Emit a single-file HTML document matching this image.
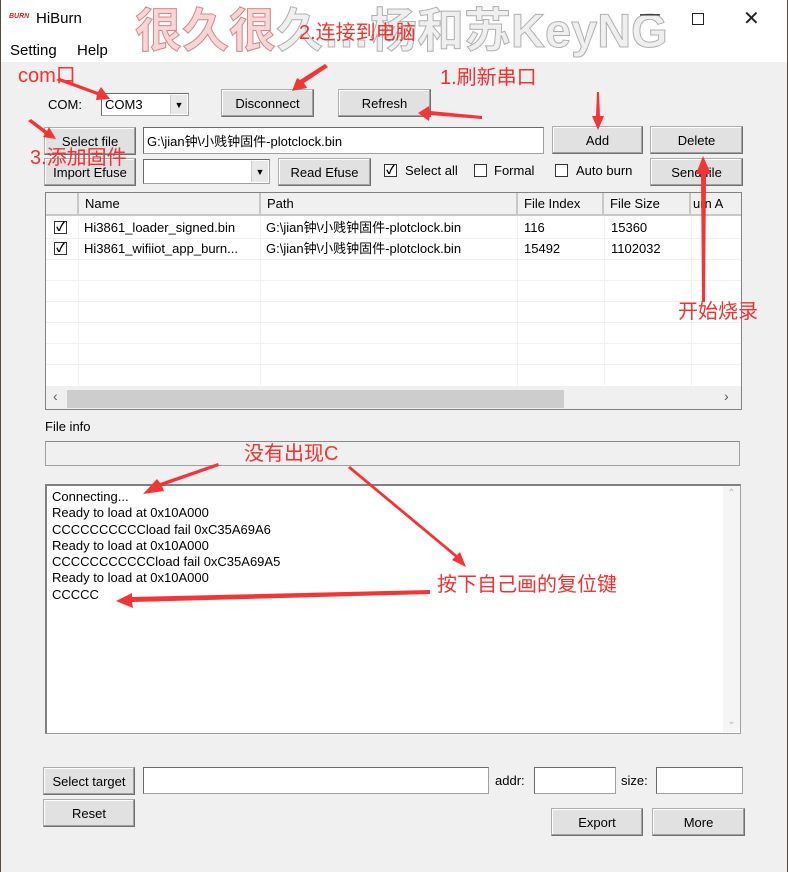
<!DOCTYPE html>
<html><head><meta charset="utf-8"><style>
*{box-sizing:border-box;margin:0;padding:0}
body{width:788px;height:872px;position:relative;overflow:hidden;background:#f0f0f0;font-family:"Liberation Sans","Noto Sans CJK SC",sans-serif;font-size:13px;color:#000}
.a{position:absolute}
.btn{position:absolute;background:#e1e1e1;border:1px solid #adadad;border-right-color:#707070;border-bottom-color:#707070;box-shadow:inset -1px -1px 0 #a0a0a0,inset 1px 1px 0 #fff;display:flex;align-items:center;justify-content:center;font-size:13px}
.inp{position:absolute;background:#fff;border:1px solid #a0a0a0;border-top-color:#696969;border-left-color:#696969;font-size:13px;padding-left:3px;display:flex;align-items:center}
.cb{position:absolute;width:13px;height:13px;border:1px solid #333;background:#fff;font-size:12px;line-height:11px;text-align:center;font-weight:bold}
.red{position:absolute;color:#f53030;font-size:20px;white-space:nowrap;line-height:1}
.dd{position:absolute;right:1px;top:1px;bottom:1px;width:17px;background:#e8e8e8;border-left:1px solid #ccc;font-size:9px;display:flex;align-items:center;justify-content:center}
.hd{position:absolute;top:0;height:22px;line-height:22px;border-right:2px solid #c8c8c8;padding-left:6px;white-space:nowrap;overflow:hidden}
.cell{position:absolute;line-height:21px;white-space:nowrap}
</style></head><body>
<div class="a" style="left:0;top:0;width:788px;height:62px;background:#fff"></div>
<div class="a" style="left:0;top:0;width:1px;height:872px;background:#5a4a40"></div>
<div class="a" style="right:0;top:0;width:1px;height:872px;background:#5a4a40"></div>
<div class="a" style="left:9px;top:13px;color:#d22;font-size:7px;font-style:italic;font-weight:bold">BURN</div>
<div class="a" style="left:36px;top:10px;font-size:15px">HiBurn</div>
<div class="a" style="left:135px;top:-8px;font-size:47px;font-weight:bold;color:#f8d6d6;-webkit-text-stroke:1px #d58888;white-space:nowrap">很久很<span style="color:#efefef;-webkit-text-stroke:1px #b0b0b0">久…杨和苏KeyNG</span></div>
<div class="a" style="left:640px;top:3px;font-size:20px;color:#333">&#8212;</div>
<div class="a" style="left:692px;top:13px;width:12px;height:12px;border:1px solid #222"></div>
<div class="a" style="left:743px;top:6px;font-size:20px;color:#222">✕</div>
<div class="a" style="left:10px;top:42px;font-size:15px">Setting</div>
<div class="a" style="left:77px;top:42px;font-size:15px">Help</div>

<div class="a" style="left:48px;top:97px">COM:</div>
<div class="inp" style="left:101px;top:93px;width:88px;height:23px">COM3<div class="dd">▼</div></div>
<div class="btn" style="left:221px;top:89px;width:93px;height:28px">Disconnect</div>
<div class="btn" style="left:338px;top:89px;width:93px;height:28px">Refresh</div>

<div class="btn" style="left:44px;top:127px;width:92px;height:28px">Select file</div>
<div class="inp" style="left:143px;top:127px;width:401px;height:27px">G:\jian钟\小贱钟固件-plotclock.bin</div>
<div class="btn" style="left:552px;top:126px;width:91px;height:28px">Add</div>
<div class="btn" style="left:650px;top:126px;width:93px;height:28px">Delete</div>

<div class="btn" style="left:44px;top:158px;width:92px;height:28px">Import Efuse</div>
<div class="inp" style="left:143px;top:159px;width:127px;height:25px"><div class="dd">▼</div></div>
<div class="btn" style="left:278px;top:158px;width:93px;height:28px">Read Efuse</div>
<div class="cb" style="left:384px;top:164px">✓</div><div class="a" style="left:405px;top:163px">Select all</div>
<div class="cb" style="left:474px;top:164px"></div><div class="a" style="left:494px;top:163px">Formal</div>
<div class="cb" style="left:555px;top:164px"></div><div class="a" style="left:576px;top:163px">Auto burn</div>
<div class="btn" style="left:650px;top:158px;width:93px;height:28px">Send file</div>

<div class="a" style="left:45px;top:192px;width:697px;height:218px;background:#fff;border:1px solid #828282;overflow:hidden">
<div class="a" style="left:0;top:0;width:697px;height:23px;background:#f0f0f0;border-bottom:2px solid #c8c8c8"></div>
<div class="hd" style="left:0;width:33px"></div>
<div class="hd" style="left:33px;width:182px">Name</div>
<div class="hd" style="left:215px;width:257px">Path</div>
<div class="hd" style="left:472px;width:86px">File Index</div>
<div class="hd" style="left:558px;width:87px">File Size</div>
<div class="hd" style="left:645px;width:60px;border:0;padding-left:2px">urn A</div>
<div class="a" style="left:0;top:45px;width:697px;height:1px;background:#f0f0f0"></div>
<div class="a" style="left:0;top:66px;width:697px;height:1px;background:#f0f0f0"></div>
<div class="a" style="left:0;top:87px;width:697px;height:1px;background:#f0f0f0"></div>
<div class="a" style="left:0;top:108px;width:697px;height:1px;background:#f0f0f0"></div>
<div class="a" style="left:0;top:129px;width:697px;height:1px;background:#f0f0f0"></div>
<div class="a" style="left:0;top:150px;width:697px;height:1px;background:#f0f0f0"></div>
<div class="a" style="left:0;top:171px;width:697px;height:1px;background:#f0f0f0"></div>
<div class="a" style="left:32px;top:24px;width:1px;height:170px;background:#f0f0f0"></div>
<div class="a" style="left:214px;top:24px;width:1px;height:170px;background:#f0f0f0"></div>
<div class="a" style="left:471px;top:24px;width:1px;height:170px;background:#f0f0f0"></div>
<div class="a" style="left:558px;top:24px;width:1px;height:170px;background:#f0f0f0"></div>
<div class="a" style="left:645px;top:24px;width:1px;height:170px;background:#f0f0f0"></div>
<div class="cb" style="left:8px;top:28px">✓</div>
<div class="cell" style="left:38px;top:24px">Hi3861_loader_signed.bin</div>
<div class="cell" style="left:220px;top:24px">G:\jian钟\小贱钟固件-plotclock.bin</div>
<div class="cell" style="left:478px;top:24px">116</div>
<div class="cell" style="left:565px;top:24px">15360</div>
<div class="cb" style="left:8px;top:49px">✓</div>
<div class="cell" style="left:38px;top:45px">Hi3861_wifiiot_app_burn...</div>
<div class="cell" style="left:220px;top:45px">G:\jian钟\小贱钟固件-plotclock.bin</div>
<div class="cell" style="left:478px;top:45px">15492</div>
<div class="cell" style="left:565px;top:45px">1102032</div>
<div class="a" style="left:0;top:193px;width:697px;height:23px;background:#f0f0f0"></div>
<div class="a" style="left:21px;top:197px;width:497px;height:18px;background:#cdcdcd"></div>
<div class="a" style="left:7px;top:195px;color:#555;font-size:14px">‹</div>
<div class="a" style="left:678px;top:195px;color:#555;font-size:14px">›</div>
</div>

<div class="a" style="left:45px;top:419px">File info</div>
<div class="a" style="left:45px;top:441px;width:695px;height:25px;border:1px solid #a0a0a0;border-top-color:#888;background:#f0f0f0"></div>

<div class="a" style="left:45px;top:484px;width:696px;height:250px;background:#fff;border:1px solid #a0a0a0;border-top:2px solid #808080;border-left:2px solid #808080;font-size:13px;line-height:16.3px;padding:3px 0 0 5px">Connecting...<br>Ready to load at 0x10A000<br>CCCCCCCCCCload fail 0xC35A69A6<br>Ready to load at 0x10A000<br>CCCCCCCCCCCload fail 0xC35A69A5<br>Ready to load at 0x10A000<br>CCCCC
<div class="a" style="right:0;top:0;width:17px;height:246px;background:#f5f5f5;color:#bbb;font-size:10px;text-align:center">⌃<div style="position:absolute;bottom:2px;width:17px">⌄</div></div></div>

<div class="btn" style="left:43px;top:767px;width:92px;height:28px">Select target</div>
<div class="inp" style="left:143px;top:767px;width:346px;height:27px"></div>
<div class="a" style="left:495px;top:773px">addr:</div>
<div class="inp" style="left:534px;top:767px;width:82px;height:27px"></div>
<div class="a" style="left:621px;top:773px">size:</div>
<div class="inp" style="left:656px;top:767px;width:87px;height:27px"></div>
<div class="btn" style="left:43px;top:799px;width:92px;height:28px">Reset</div>
<div class="btn" style="left:551px;top:808px;width:92px;height:28px">Export</div>
<div class="btn" style="left:652px;top:808px;width:93px;height:28px">More</div>

<div class="red" style="left:18px;top:66px">com口</div>
<div class="red" style="left:299px;top:23px">2.连接到电脑</div>
<div class="red" style="left:440px;top:68px">1.刷新串口</div>
<div class="red" style="left:30px;top:148px">3.添加固件</div>
<div class="red" style="left:678px;top:302px">开始烧录</div>
<div class="red" style="left:244px;top:444px">没有出现C</div>
<div class="red" style="left:437px;top:575px">按下自己画的复位键</div>

<svg class="a" style="left:0;top:0" width="788" height="872">
<g fill="#f53535">
<polygon points="56,80 60,78 98,92 101,87 110,99 96,100 97,95"/>
<polygon points="325,64 328,67 304,83 307,88 292,91 297,78 300,80"/>
<polygon points="482,116 482,119 430,115 429,121 418,113 429,106 430,111"/>
<polygon points="597,92 599,92 600,116 604,116 598,130 592,116 596,116"/>
<polygon points="28,121 31,119 47,131 49,127 56,139 43,137 45,134"/>
<polygon points="702,302 705,302 706,174 711,174 703,156 696,174 701,174"/>
<polygon points="218,463 219,466 162,486 164,491 143,494 157,479 160,483"/>
<polygon points="348,468 350,466 457,555 460,552 466,567 452,560 455,557"/>
<polygon points="430,590 430,594 132,602 133,608 116,601 132,593 132,597"/>
</g></svg>
</body></html>
